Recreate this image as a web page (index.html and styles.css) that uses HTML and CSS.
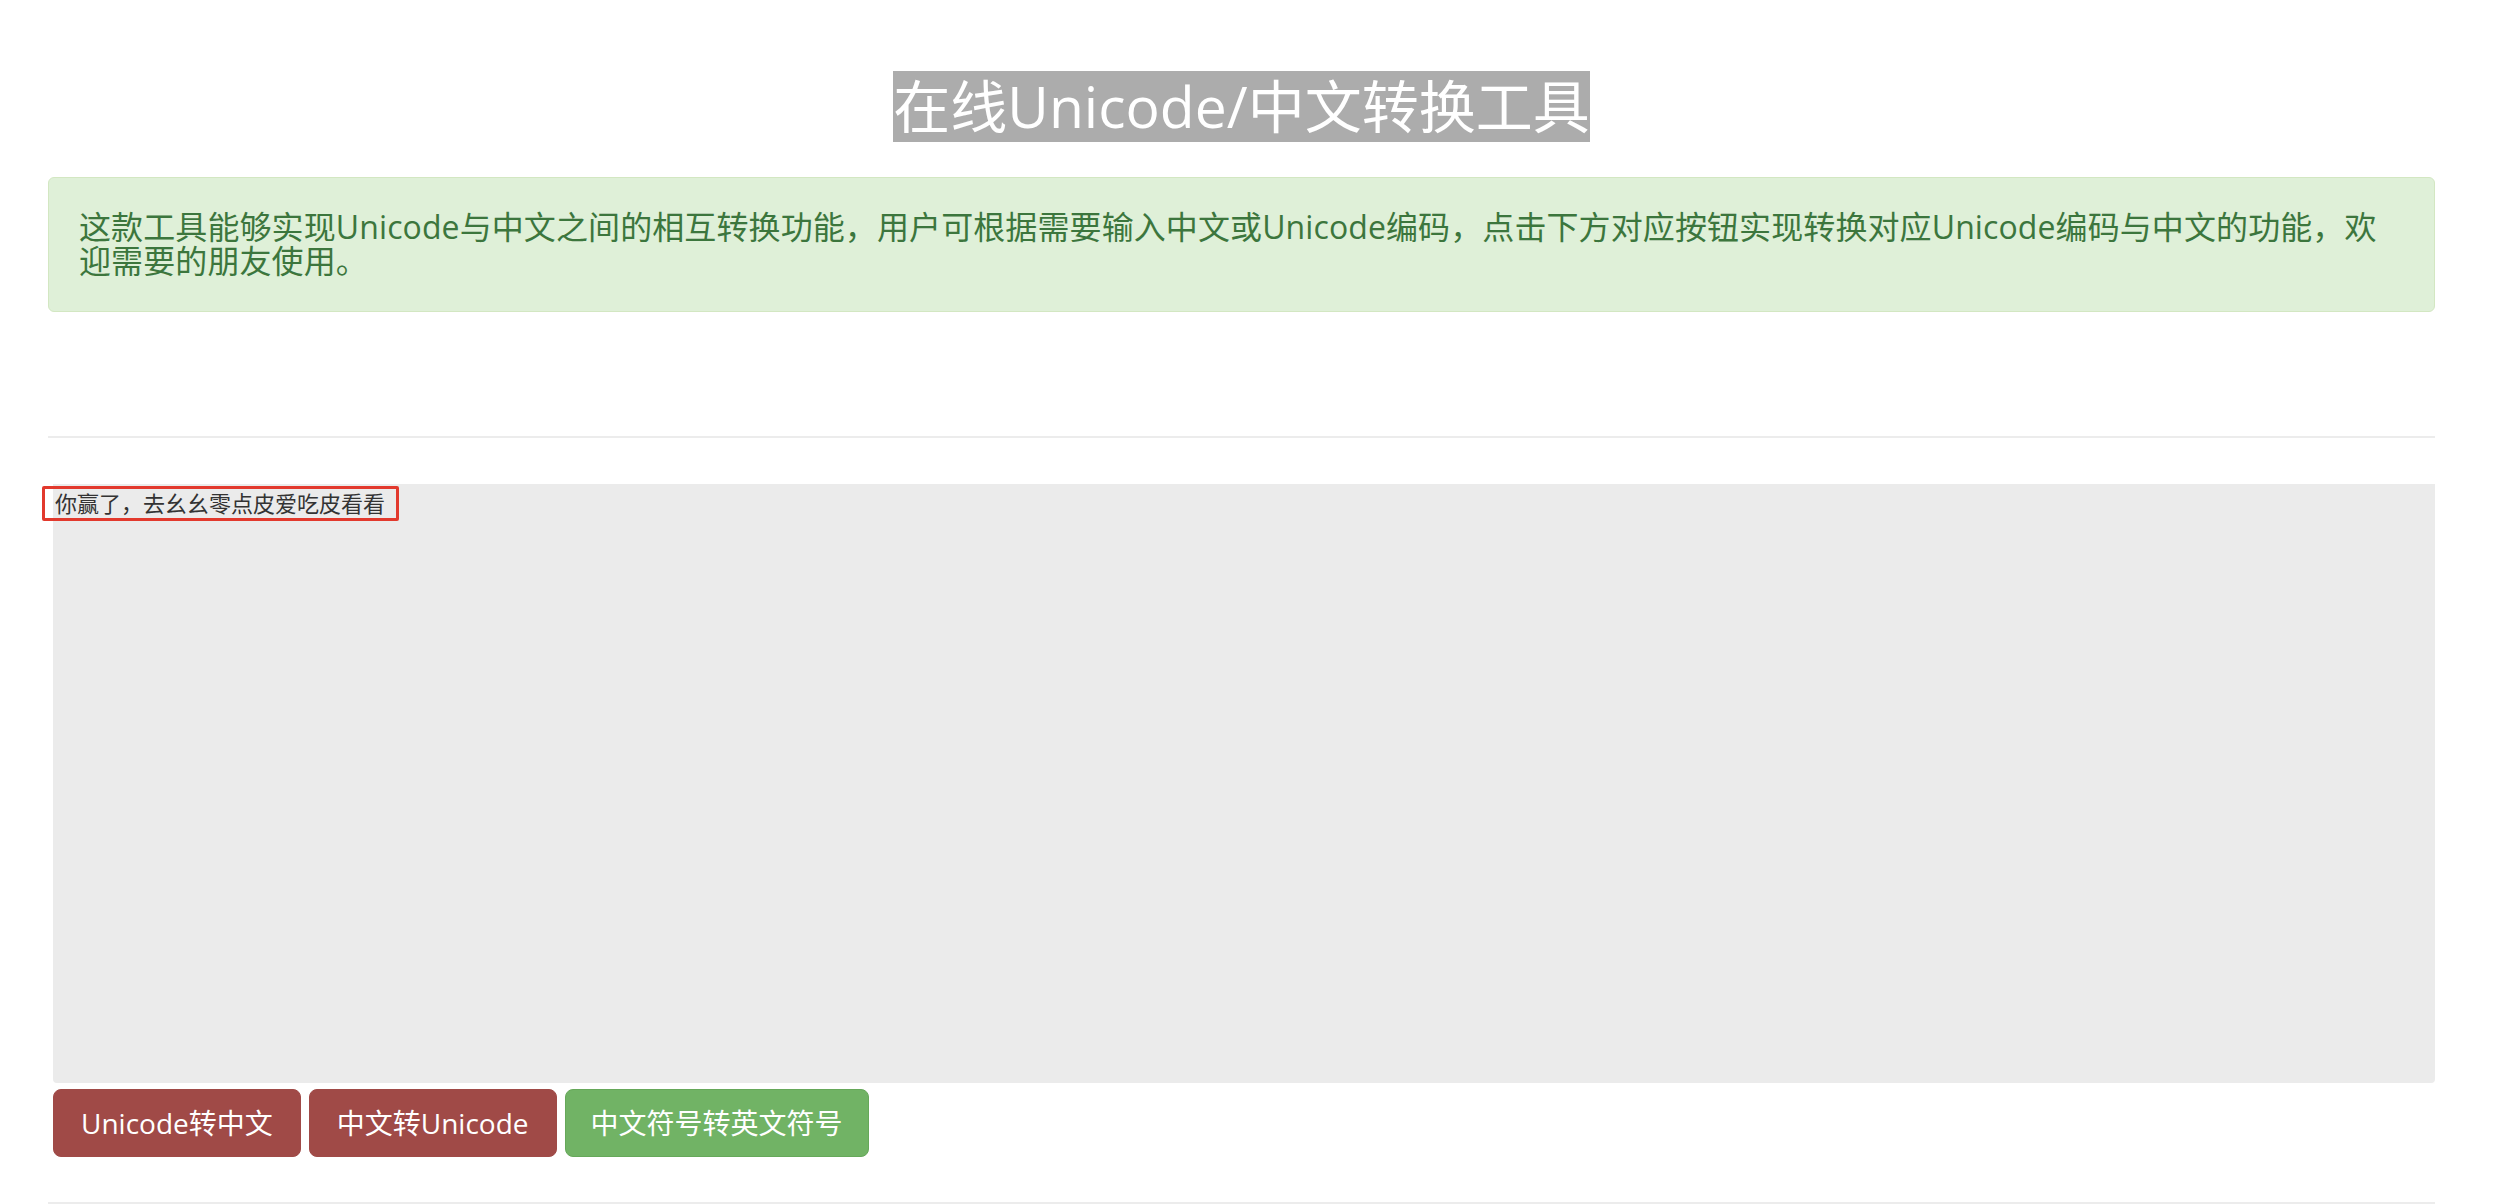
FILE: index.html
```html
<!DOCTYPE html>
<html lang="zh-CN">
<head>
<meta charset="utf-8">
<title>在线Unicode/中文转换工具</title>
<link rel="stylesheet" href="styles.css">
</head>
<body>
<div class="page">
  <h1 class="title"><span class="title-text">在线Unicode/中文转换工具</span></h1>
  <div class="alert">这款工具能够实现Unicode与中文之间的相互转换功能，用户可根据需要输入中文或Unicode编码，点击下方对应按钮实现转换对应Unicode编码与中文的功能，欢迎需要的朋友使用。</div>
  <hr class="rule rule-top">
  <div class="form">
    <div class="editor">
      <textarea class="input" spellcheck="false">你赢了，去幺幺零点皮爱吃皮看看</textarea>
      <div class="mark"></div>
    </div>
    <div class="actions">
      <button class="btn btn-red">Unicode转中文</button>
      <button class="btn btn-red">中文转Unicode</button>
      <button class="btn btn-green">中文符号转英文符号</button>
    </div>
  </div>
  <hr class="rule rule-bottom">
</div>
</body>
</html>
```
FILE: styles.css
```css
html, body {
  margin: 0;
  padding: 0;
  background: #ffffff;
}
body {
  font-family: "Open Sans", "Noto Sans CJK SC", sans-serif;
  color: #333333;
}
.page {
  width: 2387px;
  margin-left: 48px;
  padding-top: 71px;
}
.title {
  margin: 0;
  text-align: center;
  font-weight: normal;
  font-size: 57px;
  line-height: 71px;
  height: 71px;
}
.title-text {
  display: inline-block;
  background: #acacac;
  color: #ffffff;
  height: 71px;
  line-height: 71px;
  vertical-align: top;
}
.alert {
  margin-top: 35px;
  box-sizing: border-box;
  height: 135px;
  padding: 32px 50px 0 30px;
  background: #dff0d8;
  border: 1px solid #d3e7c2;
  border-radius: 6px;
  color: #3c763d;
  font-size: 32px;
  line-height: 34px;
  letter-spacing: 0.1px;
}
.rule {
  border: 0;
  height: 2px;
  background: #ececec;
  margin: 0;
}
.rule-top {
  margin-top: 124px;
}
.form {
  padding-left: 5px;
  margin-top: 46px;
}
.editor {
  position: relative;
  height: 599px;
}
.input {
  display: block;
  box-sizing: border-box;
  width: 100%;
  height: 599px;
  margin: 0;
  padding: 3px 2px;
  border: none;
  border-radius: 0 0 4px 4px;
  background: #ebebeb;
  color: #333333;
  font-family: "Noto Sans CJK SC", sans-serif;
  font-size: 22px;
  line-height: 31px;
  resize: none;
  outline: none;
}
.mark {
  position: absolute;
  left: -11px;
  top: 2px;
  width: 357px;
  height: 35px;
  box-sizing: border-box;
  border: 3px solid #e2392d;
  border-radius: 2px;
  pointer-events: none;
}
.actions {
  display: flex;
  gap: 8px;
  margin-top: 6px;
}
.btn {
  box-sizing: border-box;
  height: 68px;
  padding: 0 27px;
  border: 1px solid transparent;
  border-radius: 8px;
  color: #ffffff;
  font-family: "Open Sans", "Noto Sans CJK SC", sans-serif;
  font-size: 28px;
  line-height: 66px;
  cursor: pointer;
}
.btn-red {
  background: #a04a47;
  border-color: #a04a47;
}
.btn-green {
  padding: 0 25px;
  background: #71b365;
  border-color: #66a85a;
}
.rule-bottom {
  margin-top: 45px;
}
```
